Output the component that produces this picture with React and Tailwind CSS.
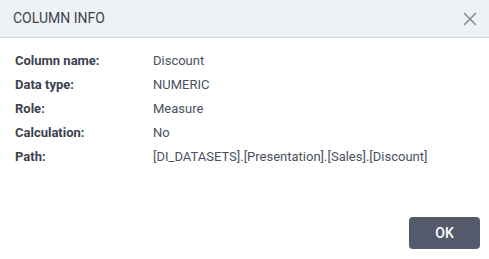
import React from 'react';

const rows = [
  ['Column name:', 'Discount'],
  ['Data type:', 'NUMERIC'],
  ['Role:', 'Measure'],
  ['Calculation:', 'No'],
  ['Path:', '[DI_DATASETS].[Presentation].[Sales].[Discount]'],
];

export default function App() {
  return (
    <div className="flex h-[259px] w-[489px] flex-col bg-white font-['Roboto',sans-serif]">
      {/* Header */}
      <div className="flex h-[38px] items-center justify-between border-b border-[#cdd6df] bg-[#eff2f5] pl-[13px] pr-[9px]">
        <span className="text-[14px] text-[#3d4350]">COLUMN INFO</span>
        <button className="flex h-[20px] w-[20px] items-center justify-center">
          <svg width="14" height="14" viewBox="0 0 14 14" fill="none">
            <path d="M1 1L13 13M13 1L1 13" stroke="#8a8d93" strokeWidth="1.6" />
          </svg>
        </button>
      </div>

      {/* Body */}
      <div className="flex-1 px-[15px] pt-[11px]">
        {rows.map(([label, value]) => (
          <div key={label} className="flex h-[24px] items-center text-[13px]">
            <span className="w-[138px] font-bold text-[#3c4250]">{label}</span>
            <span className="text-[#4b5160]">{value}</span>
          </div>
        ))}
      </div>

      {/* Footer */}
      <div className="flex justify-end pb-[10px] pr-[9px]">
        <button className="h-[32px] w-[71px] rounded-[4px] bg-[#545a6c] text-[14px] font-medium text-white">
          OK
        </button>
      </div>
    </div>
  );
}
